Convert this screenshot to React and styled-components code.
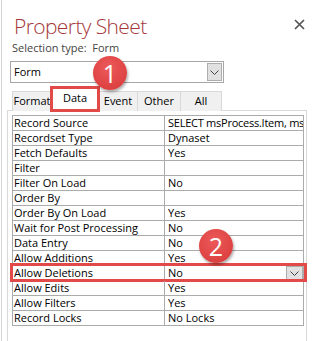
import React from 'react';
import styled, { createGlobalStyle } from 'styled-components';

const GlobalStyle = createGlobalStyle`
  html, body { margin: 0; padding: 0; background: #fff; }
  body { font-family: "Open Sans", "Noto Sans", sans-serif; }
`;

const Window = styled.div`
  position: relative;
  display: flex;
  flex-direction: column;
  width: 316px;
  height: 341px;
  margin-left: 1px;
  border-left: 1px solid #d4d4d4;
  box-sizing: border-box;
  overflow: hidden;
  background: #fff;
`;

const Header = styled.div`
  display: flex;
  justify-content: space-between;
  align-items: flex-start;
  padding: 12px 12px 0 12px;
`;

const Title = styled.h1`
  margin: 0;
  font-family: "Open Sans", sans-serif;
  font-weight: 300;
  font-size: 21px;
  line-height: 28px;
  letter-spacing: -0.6px;
  color: #a4373a;
`;

const CloseButton = styled.div`
  display: flex;
  margin-top: 7px;
  width: 11px;
  height: 11px;
`;

const SelectionLine = styled.div`
  padding-left: 10px;
  font-size: 11px;
  line-height: 16px;
  color: #444;
  white-space: pre;
`;

const Combo = styled.div`
  display: flex;
  align-items: center;
  justify-content: space-between;
  margin: 5px 0 0 8px;
  width: 214px;
  height: 22px;
  box-sizing: border-box;
  border: 1px solid #a6a6a6;
  padding: 0 1px 0 3px;
  font-size: 11px;
  line-height: 14px;
  color: #000;
`;

const DropButton = styled.div`
  display: flex;
  align-items: center;
  justify-content: center;
  width: ${(p) => p.$w}px;
  height: ${(p) => p.$h}px;
  box-sizing: border-box;
  background: #e1e1e1;
  border: 1px solid #adadad;
  flex-shrink: 0;
`;

const TabRow = styled.div`
  display: flex;
  align-items: flex-end;
  height: 24px;
  margin: 4px 0 0 10px;
`;

const Tab = styled.div`
  position: relative;
  width: ${(p) => p.$w}px;
  height: ${(p) => (p.$active ? 24 : 20)}px;
  box-sizing: border-box;
  margin-right: -1px;
  border: 1px solid #d9d9d9;
  border-bottom: none;
  background: ${(p) => (p.$active ? '#fff' : '#f0f0f0')};
  z-index: ${(p) => (p.$active ? 2 : 1)};
  font-size: 11px;
  line-height: 18px;
  padding-top: ${(p) => (p.$active ? 1 : 0)}px;
  text-align: center;
  color: #000;
  white-space: nowrap;
  &::after {
    content: '';
    display: ${(p) => (p.$highlight ? 'block' : 'none')};
    position: absolute;
    left: -2px;
    right: -2px;
    top: -2px;
    bottom: -1px;
    border: 3px solid #e14a48;
  }
`;

const Panel = styled.div`
  flex: 1;
  margin-left: 5px;
  width: 300px;
  box-sizing: border-box;
  border: 1px solid #d9d9d9;
  border-bottom: none;
  padding: 4px 2px 0 4px;
  margin-top: -1px;
`;

const Grid = styled.div`
  border-top: 1px solid #ababab;
  border-left: 1px solid #ababab;
  border-right: 1px solid #ababab;
`;

const Row = styled.div`
  position: relative;
  display: grid;
  grid-template-columns: 152px 1fr;
  height: 15px;
  box-sizing: border-box;
  border-bottom: 1px solid #ababab;
  font-size: 11px;
  line-height: 14px;
  color: #000;
  &::after {
    content: '';
    display: ${(p) => (p.$highlight ? 'block' : 'none')};
    position: absolute;
    left: -3px;
    right: -4px;
    top: -3px;
    bottom: -2px;
    border: 3px solid #e14a48;
    pointer-events: none;
  }
`;

const Label = styled.div`
  padding-left: 1px;
  border-right: 1px solid #ababab;
  white-space: nowrap;
  overflow: hidden;
`;

const Value = styled.div`
  display: flex;
  justify-content: space-between;
  padding-left: 3px;
  white-space: nowrap;
  overflow: hidden;
  letter-spacing: ${(p) => (p.$tight ? '-0.25px' : 'normal')};
`;

const Badge = styled.div`
  position: absolute;
  left: ${(p) => p.$x}px;
  top: ${(p) => p.$y}px;
  width: 34px;
  height: 34px;
  border-radius: 50%;
  background: radial-gradient(circle at 45% 35%, #ec5a5a 0%, #e04545 60%, #d43a3a 100%);
  box-shadow: 1px 2px 3px rgba(0, 0, 0, 0.35);
  color: #fff;
  display: flex;
  align-items: center;
  justify-content: center;
  font-family: "Open Sans", sans-serif;
  font-size: 25px;
  line-height: 1;
  z-index: 5;
`;

const Chevron = () => (
  <svg width="9" height="5" viewBox="0 0 9 5">
    <path d="M0.5 0.5 L4.5 4.5 L8.5 0.5" fill="none" stroke="#444" strokeWidth="1" />
  </svg>
);

const rows = [
  ['Record Source', 'SELECT msProcess.Item, ms', false, true],
  ['Recordset Type', 'Dynaset'],
  ['Fetch Defaults', 'Yes'],
  ['Filter', ''],
  ['Filter On Load', 'No'],
  ['Order By', ''],
  ['Order By On Load', 'Yes'],
  ['Wait for Post Processing', 'No'],
  ['Data Entry', 'No'],
  ['Allow Additions', 'Yes'],
  ['Allow Deletions', 'No', true],
  ['Allow Edits', 'Yes'],
  ['Allow Filters', 'Yes'],
  ['Record Locks', 'No Locks'],
];

const tabs = [
  ['Format', 40],
  ['Data', 48, true],
  ['Event', 40],
  ['Other', 44],
  ['All', 42],
];

export default function App() {
  return (
    <>
      <GlobalStyle />
      <Window>
        <Header>
          <Title>Property Sheet</Title>
          <CloseButton>
            <svg width="11" height="11" viewBox="0 0 11 11">
              <path d="M1 1 L10 10 M10 1 L1 10" stroke="#555" strokeWidth="1.7" />
            </svg>
          </CloseButton>
        </Header>
        <SelectionLine>{'Selection type:  Form'}</SelectionLine>
        <Combo>
          <span>Form</span>
          <DropButton $w={15} $h={18}>
            <Chevron />
          </DropButton>
        </Combo>
        <TabRow>
          {tabs.map(([name, w, active]) => (
            <Tab key={name} $w={w} $active={active} $highlight={active}>
              {name}
            </Tab>
          ))}
        </TabRow>
        <Panel>
          <Grid>
            {rows.map(([label, value, hl, tight]) => (
              <Row key={label} $highlight={hl}>
                <Label>{label}</Label>
                <Value $tight={tight}>
                  <span>{value}</span>
                  {hl && (
                    <DropButton $w={17} $h={14}>
                      <Chevron />
                    </DropButton>
                  )}
                </Value>
              </Row>
            ))}
          </Grid>
        </Panel>
        <Badge $x={91} $y={56}>1</Badge>
        <Badge $x={197} $y={229}>2</Badge>
      </Window>
    </>
  );
}
